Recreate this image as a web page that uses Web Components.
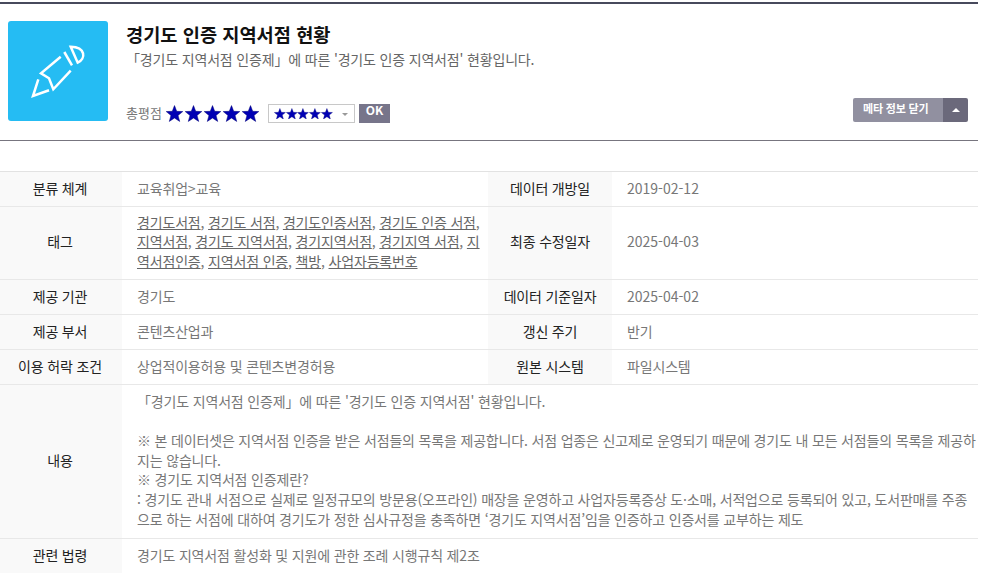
<!DOCTYPE html>
<html lang="ko">
<head>
<meta charset="utf-8">
<title>경기도 인증 지역서점 현황</title>
<style>
    html, body { margin: 0; background: #fff; }
    body {
        width: 978px;
        font-family: "Noto Sans CJK KR", "Noto Sans", sans-serif;
        font-size: 14px;
        line-height: 20px;
        letter-spacing: -0.17px;
        color: #666;
    }
    .num { letter-spacing: 0; }
</style>
</head>
<body>
<data-header>
    <span slot="title">경기도 인증 지역서점 현황</span>
    <span slot="desc">「경기도 지역서점 인증제」에 따른 '경기도 인증 지역서점' 현황입니다.</span>
</data-header>

<meta-table>
    <meta-row>
        <span slot="k1">분류 체계</span><span slot="v1">교육취업&gt;교육</span>
        <span slot="k2">데이터 개방일</span><span slot="v2" class="num">2019-02-12</span>
    </meta-row>
    <meta-row style="--lh: 19.6px; --pad: 6.6px">
        <span slot="k1">태그</span>
        <span slot="v1"><tag-link>경기도서점</tag-link>, <tag-link>경기도 서점</tag-link>, <tag-link>경기도인증서점</tag-link>, <tag-link>경기도 인증 서점</tag-link>, <tag-link>지역서점</tag-link>, <tag-link>경기도 지역서점</tag-link>, <tag-link>경기지역서점</tag-link>, <tag-link>경기지역 서점</tag-link>, <tag-link>지역서점인증</tag-link>, <tag-link>지역서점 인증</tag-link>, <tag-link>책방</tag-link>, <tag-link>사업자등록번호</tag-link></span>
        <span slot="k2">최종 수정일자</span><span slot="v2" class="num">2025-04-03</span>
    </meta-row>
    <meta-row>
        <span slot="k1">제공 기관</span><span slot="v1">경기도</span>
        <span slot="k2">데이터 기준일자</span><span slot="v2" class="num">2025-04-02</span>
    </meta-row>
    <meta-row>
        <span slot="k1">제공 부서</span><span slot="v1">콘텐츠산업과</span>
        <span slot="k2">갱신 주기</span><span slot="v2">반기</span>
    </meta-row>
    <meta-row>
        <span slot="k1">이용 허락 조건</span><span slot="v1">상업적이용허용 및 콘텐츠변경허용</span>
        <span slot="k2">원본 시스템</span><span slot="v2">파일시스템</span>
    </meta-row>
    <meta-row wide style="--lh: 19.67px; --pad: 7.65px">
        <span slot="k1">내용</span>
        <span slot="v1">「경기도 지역서점 인증제」에 따른 '경기도 인증 지역서점' 현황입니다.<br><br>※ 본 데이터셋은 지역서점 인증을 받은 서점들의 목록을 제공합니다. 서점 업종은 신고제로 운영되기 때문에 경기도 내 모든 서점들의 목록을 제공하지는 않습니다.<br>※ 경기도 지역서점 인증제란?<br>: 경기도 관내 서점으로 실제로 일정규모의 방문용(오프라인) 매장을 운영하고 사업자등록증상 도·소매, 서적업으로 등록되어 있고, 도서판매를 주종으로 하는 서점에 대하여 경기도가 정한 심사규정을 충족하면 ‘경기도 지역서점’임을 인증하고 인증서를 교부하는 제도</span>
    </meta-row>
    <meta-row wide>
        <span slot="k1">관련 법령</span><span slot="v1">경기도 지역서점 활성화 및 지원에 관한 조례 시행규칙 제2조</span>
    </meta-row>
</meta-table>

<script>
class StarRow extends HTMLElement {
    constructor() {
        super();
        this.attachShadow({ mode: 'open' });
        const size = parseFloat(this.getAttribute('size') || '20');
        const box = this.getAttribute('box') || '0 0 20 20';
        const star = `<svg width="${size}" height="${size}" viewBox="${box}"><path d="M10 .8l2.5 6.5 6.900.3-5.400 4.400 1.900 6.800L10 14.900l-5.900 3.900 1.900-6.800L.6 7.600l6.900-.3z" fill="#0000b4" stroke="#00007a" stroke-width=".6"/></svg>`;
        this.shadowRoot.innerHTML = `
            <style>
                :host { display: inline-flex; }
                svg { display: block; }
            </style>
            ${star.repeat(5)}
        `;
    }
}
customElements.define('star-row', StarRow);

class DataHeader extends HTMLElement {
    constructor() {
        super();
        this.attachShadow({ mode: 'open' });
        this.shadowRoot.innerHTML = `
            <style>
                :host {
                    display: flex;
                    box-sizing: border-box;
                    height: 139px;
                    margin-top: 2px;
                    padding: 17px 10px 0 8px;
                    gap: 18px;
                    border-top: 2px solid #474a5c;
                    border-bottom: 1px solid #77757f;
                }
                .icon {
                    width: 100px;
                    height: 100px;
                    flex: none;
                    background: #25bcf3;
                    border-radius: 3px;
                }
                .icon svg { display: block; }
                .main { flex: 1; display: flex; flex-direction: column; height: 102px; }
                .title {
                    font-size: 18.67px;
                    font-weight: 700;
                    line-height: 26px;
                    letter-spacing: 0;
                    color: #111;
                }
                .desc { margin-top: 2px; line-height: 20px; color: #666; }
                .bottom { margin-top: auto; display: flex; align-items: flex-end; height: 25px; }
                .label { font-size: 13px; color: #777; margin-right: 3px; letter-spacing: 0; }
                .select {
                    display: flex;
                    align-items: center;
                    box-sizing: border-box;
                    width: 87px;
                    height: 19px;
                    margin-left: 8px;
                    padding-left: 5px;
                    border: 1px solid #c8c8c8;
                    position: relative;
                }
                .select::after {
                    content: "";
                    position: absolute;
                    right: 6px;
                    top: 8px;
                    border: 3px solid transparent;
                    border-top: 3px solid #999;
                    border-bottom: 0;
                }
                .ok {
                    width: 31px;
                    height: 19px;
                    margin-left: 4px;
                    background: #77758a;
                    color: #fff;
                    font-size: 12px;
                    font-weight: 700;
                    line-height: 12px;
                    letter-spacing: 0;
                    text-align: center;
                }
                .toggle {
                    margin-left: auto;
                    align-self: flex-start;
                    display: flex;
                    height: 24px;
                    border-radius: 2px;
                    overflow: hidden;
                    color: #fff;
                    font-size: 11px;
                    font-weight: 700;
                    line-height: 20px;
                }
                .toggle span { width: 80px; padding-left: 10px; background: #9190a0; }
                .toggle i {
                    width: 25px;
                    background: #6b697b;
                    display: flex;
                    align-items: center;
                    justify-content: center;
                }
                .toggle i::before {
                    content: "";
                    border: 4px solid transparent;
                    border-bottom: 4px solid #fff;
                    border-top: 0;
                }
            </style>
            <div class="icon">
                <svg width="100" height="100" viewBox="0 0 100 100" fill="none" stroke="#fff" stroke-width="2.5">
                    <path d="M52.700 35.700L33 52.300l8 5 4.300 11L62.700 49.700"/>
                    <path d="M30.300 58.300L25 75l16-5.800"/>
                    <path d="M56.300 31L64 44.300"/>
                    <path d="M62.700 25.700L69.700 41.700C78 38 78 26 62.700 25.700z"/>
                </svg>
            </div>
            <div class="main">
                <div class="title"><slot name="title"></slot></div>
                <div class="desc"><slot name="desc"></slot></div>
                <div class="bottom">
                    <span class="label">총평점</span>
                    <star-row size="19" box="-.8 -1 21.6 21.6"></star-row>
                    <div class="select"><star-row size="11.8"></star-row></div>
                    <div class="ok">OK</div>
                    <div class="toggle"><span>메타 정보 닫기</span><i></i></div>
                </div>
            </div>
        `;
    }
}
customElements.define('data-header', DataHeader);

class MetaTable extends HTMLElement {
    constructor() {
        super();
        this.attachShadow({ mode: 'open' });
        this.shadowRoot.innerHTML = `
            <style>
                :host {
                    display: block;
                    margin-top: 30px;
                    border-top: 1px solid #e2e2e2;
                }
            </style>
            <slot></slot>
        `;
    }
}
customElements.define('meta-table', MetaTable);

class MetaRow extends HTMLElement {
    constructor() {
        super();
        this.attachShadow({ mode: 'open' });
        const wide = this.hasAttribute('wide');
        this.shadowRoot.innerHTML = `
            <style>
                :host {
                    display: grid;
                    grid-template-columns: ${wide ? '122px 1fr' : '122px 366px 124px 1fr'};
                    border-bottom: 1px solid #e8e8e8;
                    line-height: var(--lh, 20px);
                }
                .k, .v { display: flex; align-items: center; }
                .k {
                    justify-content: center;
                    padding-bottom: 2px;
                    background: #f9f9f9;
                    color: #222;
                }
                .k.first { padding-right: 2px; }
                .v {
                    padding: calc(var(--pad, 7px) - 1px) ${wide ? 0 : 7}px calc(var(--pad, 7px) + 1px) 15px;
                    color: #777;
                }
            </style>
            <div class="k first"><slot name="k1"></slot></div>
            <div class="v"><slot name="v1"></slot></div>
            ${wide ? '' : `
            <div class="k"><slot name="k2"></slot></div>
            <div class="v"><slot name="v2"></slot></div>`}
        `;
    }
}
customElements.define('meta-row', MetaRow);

class TagLink extends HTMLElement {
    constructor() {
        super();
        this.attachShadow({ mode: 'open' });
        this.shadowRoot.innerHTML = `<style>:host { display: inline; color: #666; text-decoration: underline; }</style><slot></slot>`;
    }
}
customElements.define('tag-link', TagLink);
</script>
</body>
</html>
